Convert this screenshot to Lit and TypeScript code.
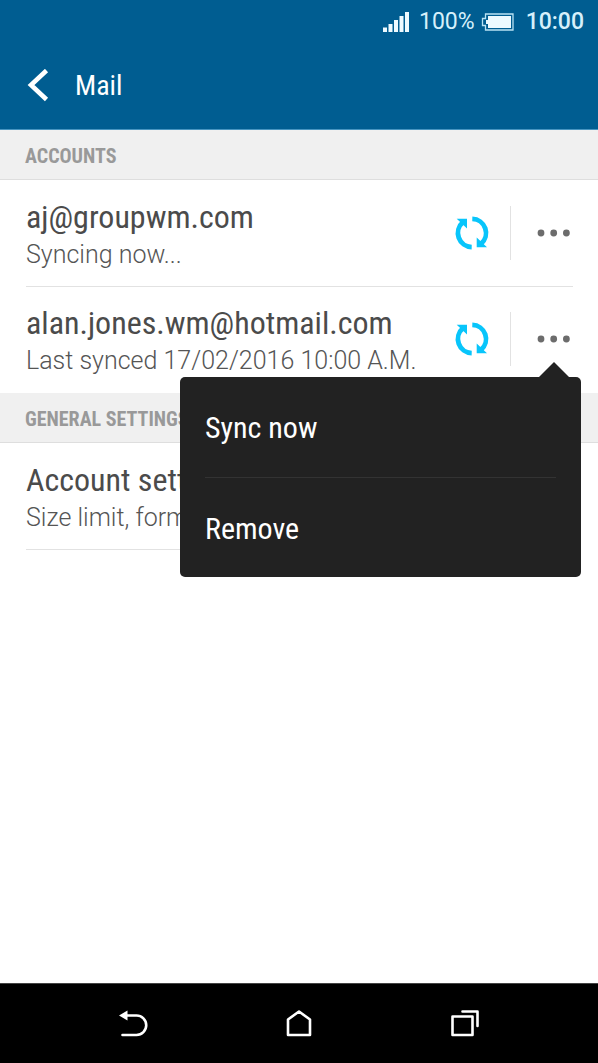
import { LitElement, html, css, svg, nothing } from "lit";
import { customElement, property, state } from "lit/decorators.js";

interface Account {
  address: string;
  status: string;
}

const ACCOUNTS: Account[] = [
  { address: "aj@groupwm.com", status: "Syncing now..." },
  { address: "alan.jones.wm@hotmail.com", status: "Last synced 17/02/2016 10:00 A.M." },
];

const MENU_ITEMS = ["Sync now", "Remove"];

@customElement("status-bar")
class StatusBar extends LitElement {
  static styles = css`
    :host {
      display: flex;
      align-items: center;
      justify-content: flex-end;
      height: 43px;
      padding-right: 14px;
      color: #d6f0fb;
      font-size: 23px;
      line-height: 28px;
    }
    .signal { margin-right: 9px; }
    .battery { margin: 0 12px 0 6px; }
    .clock { font-weight: 500; }
    svg { display: block; fill: #eefaff; }
  `;

  render() {
    return html`
      <svg class="signal" width="28" height="20" viewBox="0 0 28 20" role="img" aria-label="Signal strength">
        <path d="M1 15.500h4V20H1zM6.500 12h4v8h-4zM12 8h4v12h-4zM17.500 4h4v16h-4zM23 0h4v20h-4z" />
      </svg>
      <span>100%</span>
      <svg class="battery" width="33" height="18" viewBox="0 0 33 18" role="img" aria-label="Battery">
        <path d="M4.500 1H32V17H4.500V12.500H1.500V5.500H4.500Z" fill="none" stroke="#b9e2f3" stroke-width="1.300" />
        <path d="M7 3h23v12H7v-4H5V7h2z" />
      </svg>
      <span class="clock">10:00</span>
    `;
  }
}

@customElement("account-row")
class AccountRow extends LitElement {
  @property() heading = "";
  @property() detail = "";
  @property({ type: Boolean }) syncable = false;
  @property({ type: Boolean }) open = false;

  static styles = css`
    :host {
      display: flex;
      align-items: center;
      box-sizing: border-box;
      min-height: 107px;
      margin: 0 25px 0 26px;
      border-bottom: 1px solid #e2e2e2;
      color: #4b4b4b;
    }
    :host([last]) {
      min-height: 106px;
      padding-bottom: 2px;
      border-bottom: 0;
    }
    .text {
      flex: 1;
      min-width: 0;
      padding-top: 6px;
      white-space: nowrap;
    }
    .heading {
      font-family: "Roboto Condensed", Roboto, sans-serif;
      font-size: 32px;
      font-weight: 400;
      line-height: 38px;
      margin: 0;
    }
    .detail {
      font-size: 25px;
      font-weight: 300;
      line-height: 38px;
      margin: 0;
      color: #555;
    }
    button {
      display: flex;
      align-items: center;
      padding: 0;
      border: 0;
      background: none;
      cursor: pointer;
    }
    .sync { margin-right: 20px; }
    .more-area {
      position: relative;
      border-left: 1px solid #e2e2e2;
    }
    .more {
      justify-content: flex-end;
      width: 62px;
      height: 54px;
    }
    svg { display: block; }
    .menu {
      position: absolute;
      z-index: 1;
      top: 65px;
      right: -8px;
      box-sizing: border-box;
      width: 401px;
      padding: 0 25px;
      border-radius: 5px;
      background: #222;
    }
    .menu::before {
      content: "";
      position: absolute;
      right: 12px;
      bottom: 100%;
      border: 15px solid transparent;
      border-top: 0;
      border-bottom-color: #222;
    }
    .item {
      width: 100%;
      height: 100px;
      padding-top: 2px;
      color: #fff;
      font-family: "Roboto Condensed", Roboto, sans-serif;
      font-size: 30px;
      line-height: 36px;
      text-align: left;
    }
    .item + .item { border-top: 1px solid #333; }
  `;

  private toggle() {
    this.dispatchEvent(new CustomEvent("toggle-menu"));
  }

  private renderControls() {
    return html`
      <button class="sync" aria-label="Sync ${this.heading}">
        <svg width="36" height="34" viewBox="0 0 36 34">
          <path d="M17.700 31.100A14.100 14.100 0 0 1 9 6.200M18.300 2.900A14.100 14.100 0 0 1 27 27.800" fill="none" stroke="#08c5fb" stroke-width="4.800" />
          <path d="M2.700 2.700H13V12.500ZM33 31.300H22.700V21.500Z" fill="#08c5fb" />
        </svg>
      </button>
      <div class="more-area">
        <button class="more" aria-label="More options" aria-haspopup="menu" aria-expanded=${this.open} @click=${this.toggle}>
          <svg width="36" height="8" viewBox="0 0 36 8" fill="#6c6c6c">
            ${[4, 16.7, 29.4].map((x) => svg`<circle cx=${x} cy="4" r="3.400" />`)}
          </svg>
        </button>
        ${this.open
          ? html`<div class="menu" role="menu">
              ${MENU_ITEMS.map((item) => html`<button class="item" role="menuitem">${item}</button>`)}
            </div>`
          : nothing}
      </div>
    `;
  }

  render() {
    return html`
      <div class="text">
        <h3 class="heading">${this.heading}</h3>
        <p class="detail">${this.detail}</p>
      </div>
      ${this.syncable ? this.renderControls() : nothing}
    `;
  }
}

@customElement("app-root")
class AppRoot extends LitElement {
  @state() private openIndex = 1;

  static styles = css`
    :host {
      display: flex;
      flex-direction: column;
      min-height: 100vh;
      background: #fff;
      font-family: Roboto, sans-serif;
    }
    .top {
      background: #005d91;
      border-bottom: 1px solid #4795c1;
    }
    .title-bar {
      display: flex;
      align-items: center;
      gap: 26px;
      box-sizing: border-box;
      height: 86px;
      padding: 0 25px 1px 27px;
      color: #fff;
    }
    .title {
      margin: 0;
      font-family: "Roboto Condensed", Roboto, sans-serif;
      font-size: 28px;
      font-weight: 400;
      line-height: 37px;
    }
    button {
      display: block;
      padding: 0;
      border: 0;
      background: none;
      cursor: pointer;
    }
    svg { display: block; fill: none; stroke: #fff; }
    main { flex: 1; }
    .section {
      box-sizing: border-box;
      height: 50px;
      margin: 0;
      padding: 2px 25px 0;
      border-bottom: 1px solid #dedede;
      background: #f0f0f0;
      color: #999;
      font-family: "Roboto Condensed", Roboto, sans-serif;
      font-size: 20px;
      font-weight: 700;
      line-height: 48px;
    }
    .nav {
      display: flex;
      align-items: center;
      justify-content: center;
      gap: 136px;
      box-sizing: border-box;
      height: 80px;
      padding-bottom: 1px;
      border-top: 1px solid #444;
      background: #000;
    }
  `;

  private toggle(index: number) {
    this.openIndex = this.openIndex === index ? -1 : index;
  }

  render() {
    return html`
      <header class="top">
        <status-bar></status-bar>
        <div class="title-bar">
          <button aria-label="Back">
            <svg width="22" height="33" viewBox="0 0 22 33"><path d="M19.500 1.500L4 16L19.500 30.500" stroke-width="4.600" /></svg>
          </button>
          <h1 class="title">Mail</h1>
        </div>
      </header>
      <main>
        <h2 class="section">ACCOUNTS</h2>
        ${ACCOUNTS.map(
          (account, i) => html`<account-row
            .heading=${account.address}
            .detail=${account.status}
            syncable
            ?last=${i === ACCOUNTS.length - 1}
            .open=${this.openIndex === i}
            @toggle-menu=${() => this.toggle(i)}
          ></account-row>`
        )}
        <h2 class="section">GENERAL SETTINGS</h2>
        <account-row heading="Account settings" detail="Size limit, format"></account-row>
      </main>
      <nav class="nav" aria-label="System">
        <button aria-label="Back">
          <svg width="30" height="28" viewBox="0 0 30 28">
            <path d="M9 6.500H18.500A9.700 9.700 0 0 1 18.500 26H4.500" stroke-width="2.600" stroke-linecap="round" />
            <path d="M1 6.500L9.500 1.500V11.500Z" fill="#fff" stroke="none" />
          </svg>
        </button>
        <button aria-label="Home">
          <svg width="30" height="28" viewBox="0 0 30 28">
            <path d="M4 10.500L15 2.500L26 10.500V26H4Z" stroke-width="2.600" stroke-linejoin="round" />
          </svg>
        </button>
        <button aria-label="Recent apps">
          <svg width="30" height="28" viewBox="0 0 30 28">
            <path d="M2.500 7.500H22.500V26H2.500ZM12.500 2.500H27.500V17" stroke-width="2.600" stroke-linecap="round" stroke-linejoin="round" />
          </svg>
        </button>
      </nav>
    `;
  }
}
